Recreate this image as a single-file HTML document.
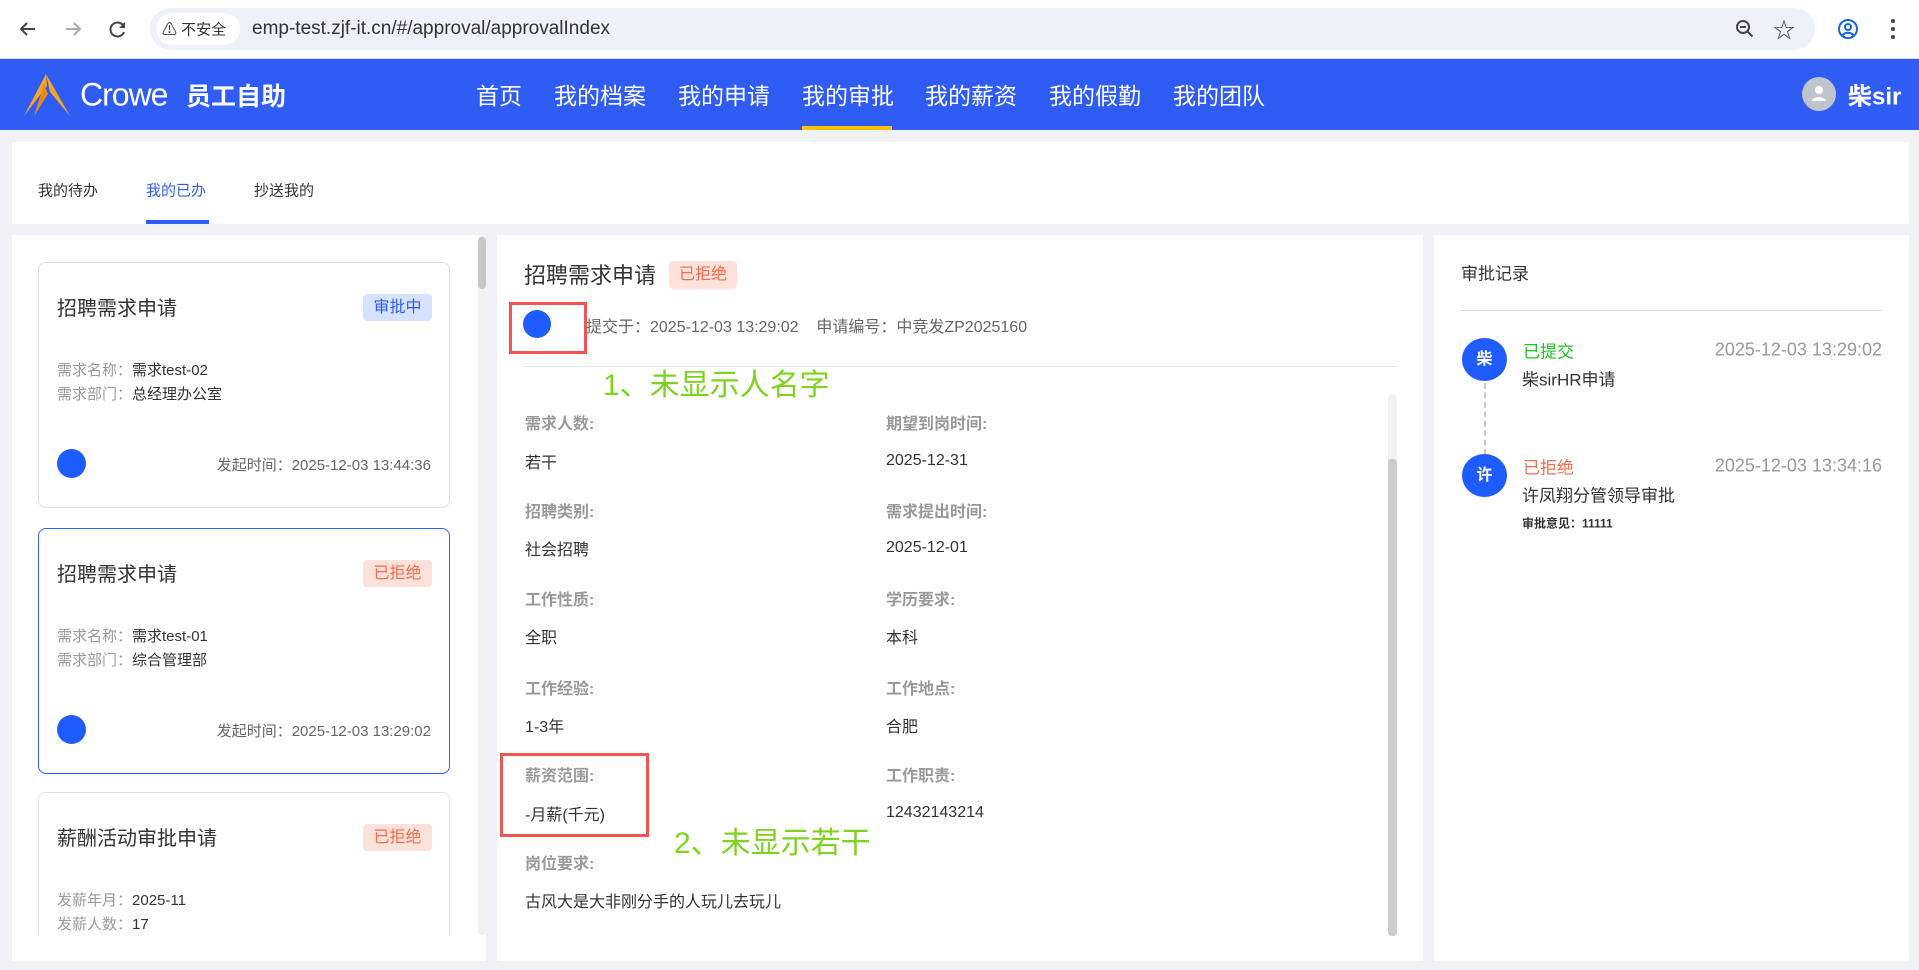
<!DOCTYPE html>
<html><head><meta charset="utf-8"><style>
*{margin:0;padding:0;box-sizing:border-box}
body{width:1919px;height:970px;position:relative;overflow:hidden;background:#f0f2f5;font-family:"Liberation Sans","Noto Sans CJK SC",sans-serif;color:#333}
.a{position:absolute;white-space:nowrap}
.vc{transform:translateY(-50%)}
.badge{position:absolute;border-radius:4px;font-size:16px;text-align:center}
.rej{background:#fde2dc;color:#f56c4c}
.ing{background:#d6e2ff;color:#2f5cf5}
.card{position:absolute;left:26px;width:412px;height:246px;border:1px solid #dcdfe6;border-radius:8px;background:#fff}
.card.sel{border-color:#2f5cf5}
.ct{position:absolute;left:18px;font-size:20px;color:#333}
.cf{position:absolute;left:18px;font-size:15px;color:#999}
.cf b{font-weight:normal;color:#333}
.dot{position:absolute;width:29px;height:29px;border-radius:50%;background:#1f5cff}
.ctime{position:absolute;right:18px;font-size:15px;color:#666}
.lab{position:absolute;font-size:16px;color:#999;font-weight:bold}
.val{position:absolute;font-size:16px;color:#333}
</style></head><body>
<div class="a" style="left:0;top:0;width:1919px;height:59px;background:#fff;border-bottom:1px solid #ddd"></div>
<svg class="a" style="left:16px;top:17px" width="24" height="24" viewBox="0 0 24 24"><path d="M19 12H6M11 6l-6 6 6 6" stroke="#444" stroke-width="2" fill="none"/></svg>
<svg class="a" style="left:61px;top:17px" width="24" height="24" viewBox="0 0 24 24"><path d="M5 12h13M13 6l6 6-6 6" stroke="#aaa" stroke-width="2" fill="none"/></svg>
<svg class="a" style="left:106px;top:17px" width="24" height="24" viewBox="0 0 24 24"><path d="M18 10A7 7 0 1 0 18 15" stroke="#444" stroke-width="2" fill="none"/><path d="M19 5v6h-6" fill="#444"/></svg>
<div class="a" style="left:150px;top:8px;width:1665px;height:42px;border-radius:21px;background:#edf1f9"></div>
<div class="a" style="left:156px;top:13px;width:84px;height:32px;border-radius:16px;background:#fff"></div>
<div class="a vc" style="left:162px;top:29px;font-size:15px;color:#333">⚠ 不安全</div>
<div class="a vc" style="left:252px;top:29px;font-size:19px;color:#333">emp-test.zjf-it.cn/#/approval/approvalIndex</div>
<svg class="a" style="left:1734px;top:18px" width="22" height="22" viewBox="0 0 22 22"><circle cx="9" cy="9" r="6" stroke="#444" stroke-width="2" fill="none"/><path d="M6 9h6M13.5 13.5l5 5" stroke="#444" stroke-width="2"/></svg>
<div class="a vc" style="left:1773px;top:29px;font-size:22px;color:#444">☆</div>
<svg class="a" style="left:1836px;top:17px" width="24" height="24" viewBox="0 0 24 24"><circle cx="12" cy="12" r="9" stroke="#1a66d2" stroke-width="2" fill="none"/><circle cx="12" cy="10" r="3" stroke="#1a66d2" stroke-width="2" fill="none"/><path d="M6.5 18c3-3 8-3 11 0" stroke="#1a66d2" stroke-width="2" fill="none"/></svg>
<div class="a" style="left:1891px;top:19px;width:4px;height:4px;border-radius:2px;background:#444;box-shadow:0 8px 0 #444,0 16px 0 #444"></div>
<div class="a" style="left:0;top:59px;width:1919px;height:71px;background:#305cf6"></div>
<svg class="a" style="left:20px;top:72px" width="54" height="46" viewBox="0 0 54 46"><path d="M26 2L4 44L27 14Z" fill="#f5a623"/><path d="M26 2L50 44L30 20Z" fill="#f5a623"/><path d="M24 12L14 44L28 22Z" fill="#e8891a"/></svg>
<div class="a vc" style="left:80px;top:95px;font-size:32px;color:#fff;letter-spacing:-1px">Crowe</div>
<div class="a vc" style="left:186px;top:95px;font-size:25px;color:#fff;font-weight:bold">员工自助</div>
<div class="a vc" style="left:476px;top:94px;font-size:23px;color:#fff">首页</div>
<div class="a vc" style="left:554px;top:94px;font-size:23px;color:#fff">我的档案</div>
<div class="a vc" style="left:678px;top:94px;font-size:23px;color:#fff">我的申请</div>
<div class="a vc" style="left:802px;top:94px;font-size:23px;color:#fff">我的审批</div>
<div class="a" style="left:802px;top:126px;width:90px;height:4px;background:#ffc107"></div>
<div class="a vc" style="left:925px;top:94px;font-size:23px;color:#fff">我的薪资</div>
<div class="a vc" style="left:1049px;top:94px;font-size:23px;color:#fff">我的假勤</div>
<div class="a vc" style="left:1173px;top:94px;font-size:23px;color:#fff">我的团队</div>
<div class="a" style="left:1802px;top:77px;width:34px;height:34px;border-radius:50%;background:#c0c4cc"></div>
<svg class="a" style="left:1809px;top:84px" width="20" height="20" viewBox="0 0 20 20"><circle cx="10" cy="6" r="4" fill="#fff"/><path d="M3 17c0-5 14-5 14 0z" fill="#fff"/></svg>
<div class="a vc" style="left:1848px;top:94px;font-size:24px;color:#fff;font-weight:bold">柴sir</div>
<div class="a" style="left:12px;top:142px;width:1897px;height:82px;background:#fff"></div>
<div class="a vc" style="left:38px;top:190px;font-size:15px;color:#333">我的待办</div>
<div class="a vc" style="left:146px;top:190px;font-size:15px;color:#2f5cf5">我的已办</div>
<div class="a" style="left:146px;top:220px;width:63px;height:4px;background:#2f5cf5"></div>
<div class="a vc" style="left:254px;top:190px;font-size:15px;color:#333">抄送我的</div>
<div class="a" style="left:12px;top:235px;width:474px;height:726px;background:#fff;overflow:hidden">
 <div class="a" style="left:466px;top:0;width:8px;height:700px;background:#f1f1f1;border-radius:4px"></div>
 <div class="a" style="left:466px;top:2px;width:8px;height:52px;background:#c8c8c8;border-radius:4px"></div>
 <div class="card" style="top:27px">
  <div class="ct" style="top:29px">招聘需求申请</div>
  <div class="badge ing" style="left:324px;top:31px;width:69px;height:27px;line-height:27px">审批中</div>
  <div class="cf" style="top:96px">需求名称：<b>需求test-02</b></div>
  <div class="cf" style="top:120px">需求部门：<b>总经理办公室</b></div>
  <div class="dot" style="left:18px;top:186px"></div>
  <div class="ctime" style="top:191px">发起时间：2025-12-03 13:44:36</div>
 </div>
 <div class="card sel" style="top:293px">
  <div class="ct" style="top:29px">招聘需求申请</div>
  <div class="badge rej" style="left:324px;top:31px;width:69px;height:27px;line-height:27px">已拒绝</div>
  <div class="cf" style="top:96px">需求名称：<b>需求test-01</b></div>
  <div class="cf" style="top:120px">需求部门：<b>综合管理部</b></div>
  <div class="dot" style="left:18px;top:186px"></div>
  <div class="ctime" style="top:191px">发起时间：2025-12-03 13:29:02</div>
 </div>
 <div class="card" style="top:557px;height:300px">
  <div class="ct" style="top:29px">薪酬活动审批申请</div>
  <div class="badge rej" style="left:324px;top:31px;width:69px;height:27px;line-height:27px">已拒绝</div>
  <div class="cf" style="top:96px">发薪年月：<b>2025-11</b></div>
  <div class="cf" style="top:120px">发薪人数：<b>17</b></div>
 </div>
 <div class="a" style="left:0;top:700px;width:474px;height:26px;background:#fff"></div>
</div>
<div class="a" style="left:497px;top:235px;width:926px;height:726px;background:#fff"></div>
<div class="a vc" style="left:524px;top:274px;font-size:22px;color:#333">招聘需求申请</div>
<div class="badge rej" style="left:669px;top:261px;width:68px;height:28px;line-height:28px">已拒绝</div>
<div class="a" style="left:509px;top:302px;width:78px;height:52px;border:3px solid #f25454"></div>
<div class="dot" style="left:523px;top:310px;width:28px;height:28px"></div>
<div class="a vc" style="left:586px;top:325px;font-size:16px;color:#666">提交于：2025-12-03 13:29:02 &nbsp;&nbsp; 申请编号：中竞发ZP2025160</div>
<div class="a" style="left:524px;top:366px;width:874px;height:1px;background:#e4e7ed"></div>
<div class="a vc" style="left:603px;top:382px;font-size:30px;color:#7ed321">1、未显示人名字</div>
<div class="a" style="left:1388px;top:394px;width:9px;height:542px;background:#f1f1f1;border-radius:4px"></div>
<div class="a" style="left:1388px;top:459px;width:9px;height:477px;background:#cdcdcd;border-radius:4px"></div>
<div class="lab vc" style="left:525px;top:422px">需求人数:</div><div class="lab vc" style="left:886px;top:422px">期望到岗时间:</div>
<div class="val vc" style="left:525px;top:461px">若干</div><div class="val vc" style="left:886px;top:461px">2025-12-31</div>
<div class="lab vc" style="left:525px;top:510px">招聘类别:</div><div class="lab vc" style="left:886px;top:510px">需求提出时间:</div>
<div class="val vc" style="left:525px;top:548px">社会招聘</div><div class="val vc" style="left:886px;top:548px">2025-12-01</div>
<div class="lab vc" style="left:525px;top:598px">工作性质:</div><div class="lab vc" style="left:886px;top:598px">学历要求:</div>
<div class="val vc" style="left:525px;top:636px">全职</div><div class="val vc" style="left:886px;top:636px">本科</div>
<div class="lab vc" style="left:525px;top:687px">工作经验:</div><div class="lab vc" style="left:886px;top:687px">工作地点:</div>
<div class="val vc" style="left:525px;top:725px">1-3年</div><div class="val vc" style="left:886px;top:725px">合肥</div>
<div class="lab vc" style="left:525px;top:774px">薪资范围:</div><div class="lab vc" style="left:886px;top:774px">工作职责:</div>
<div class="val vc" style="left:525px;top:813px">-月薪(千元)</div><div class="val vc" style="left:886px;top:813px">12432143214</div>
<div class="lab vc" style="left:525px;top:862px">岗位要求:</div>
<div class="val vc" style="left:525px;top:900px">古风大是大非刚分手的人玩儿去玩儿</div>
<div class="a" style="left:500px;top:753px;width:149px;height:84px;border:3px solid #f25454"></div>
<div class="a vc" style="left:674px;top:840px;font-size:30px;color:#7ed321">2、未显示若干</div>
<div class="a" style="left:1434px;top:235px;width:475px;height:726px;background:#fff"></div>
<div class="a vc" style="left:1461px;top:272px;font-size:17px;color:#333">审批记录</div>
<div class="a" style="left:1461px;top:310px;width:421px;height:1px;background:#dcdfe6"></div>
<div class="a" style="left:1484px;top:383px;width:0;height:72px;border-left:2px dashed #c8c8c8"></div>
<div class="a" style="left:1462px;top:338px;width:45px;height:43px;border-radius:50%;background:#1f5cff;color:#fff;font-weight:bold;font-size:16px;text-align:center;line-height:43px">柴</div>
<div class="a vc" style="left:1523px;top:350px;font-size:17px;color:#1ec31e">已提交</div>
<div class="a vc" style="right:37px;top:350px;font-size:18px;color:#999">2025-12-03 13:29:02</div>
<div class="a vc" style="left:1522px;top:378px;font-size:17px;color:#333">柴sirHR申请</div>
<div class="a" style="left:1462px;top:454px;width:45px;height:43px;border-radius:50%;background:#1f5cff;color:#fff;font-weight:bold;font-size:16px;text-align:center;line-height:43px">许</div>
<div class="a vc" style="left:1523px;top:466px;font-size:17px;color:#f56c4c">已拒绝</div>
<div class="a vc" style="right:37px;top:466px;font-size:18px;color:#999">2025-12-03 13:34:16</div>
<div class="a vc" style="left:1522px;top:494px;font-size:17px;color:#333">许凤翔分管领导审批</div>
<div class="a vc" style="left:1522px;top:523px;font-size:12px;color:#333;font-weight:bold">审批意见：11111</div>
</body></html>
